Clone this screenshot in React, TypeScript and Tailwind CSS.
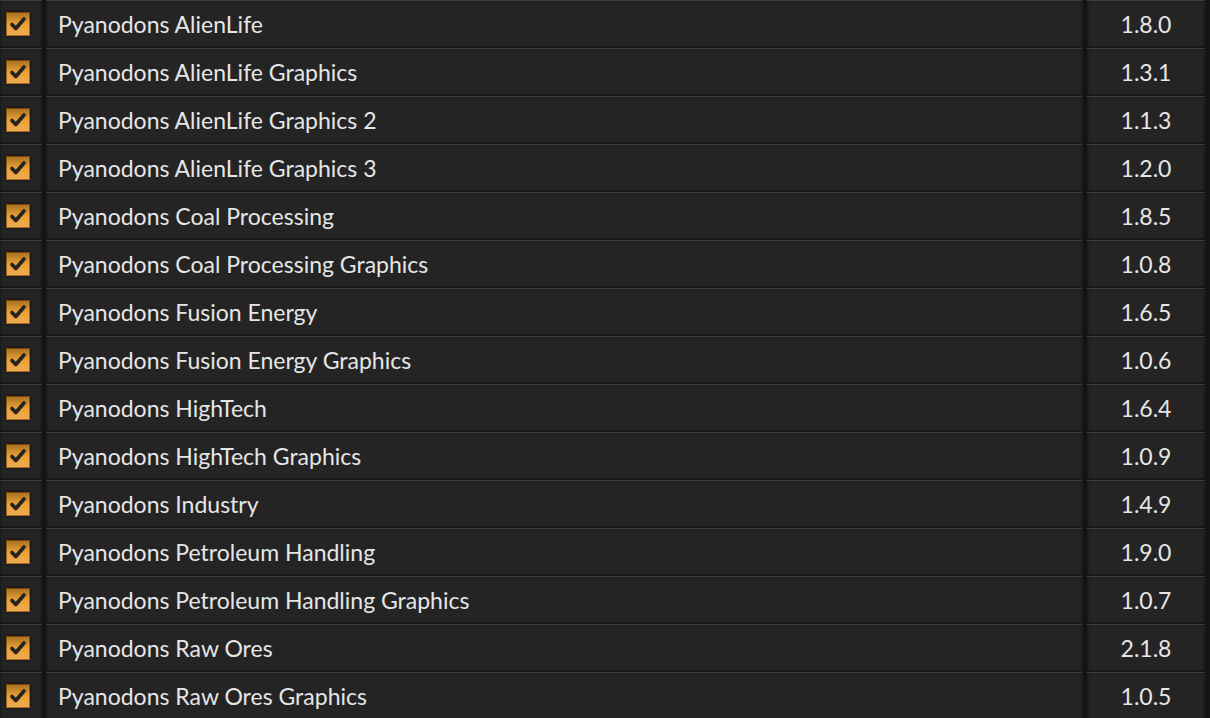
const mods: [string, string][] = [
  ["Pyanodons AlienLife", "1.8.0"],
  ["Pyanodons AlienLife Graphics", "1.3.1"],
  ["Pyanodons AlienLife Graphics 2", "1.1.3"],
  ["Pyanodons AlienLife Graphics 3", "1.2.0"],
  ["Pyanodons Coal Processing", "1.8.5"],
  ["Pyanodons Coal Processing Graphics", "1.0.8"],
  ["Pyanodons Fusion Energy", "1.6.5"],
  ["Pyanodons Fusion Energy Graphics", "1.0.6"],
  ["Pyanodons HighTech", "1.6.4"],
  ["Pyanodons HighTech Graphics", "1.0.9"],
  ["Pyanodons Industry", "1.4.9"],
  ["Pyanodons Petroleum Handling", "1.9.0"],
  ["Pyanodons Petroleum Handling Graphics", "1.0.7"],
  ["Pyanodons Raw Ores", "2.1.8"],
  ["Pyanodons Raw Ores Graphics", "1.0.5"],
]

function Checkbox() {
  return (
    <div className="size-6 bg-gradient-to-b from-[#a86e1c] via-[#eaa03a] to-[#f0ad4c] shadow-[inset_0_0_0_1px_rgba(70,40,5,0.5),0_0_3px_rgba(0,0,0,0.7)]">
      <svg viewBox="0 0 24 24" className="size-6">
        <path
          d="M6 12.5 L9.8 16.5 L18 7"
          fill="none"
          stroke="#26231f"
          strokeWidth="3.6"
          strokeLinecap="round"
          strokeLinejoin="round"
        />
      </svg>
    </div>
  )
}

const cell =
  "h-full bg-[#242424] border-t border-[#3a3a3a] shadow-[inset_2px_0_3px_-1px_rgba(0,0,0,0.35),inset_-2px_0_3px_-1px_rgba(0,0,0,0.35)]"

export default function App() {
  return (
    <div
      className="h-[718px] w-[1210px] overflow-hidden bg-[#141414]"
      style={{ fontFamily: "Lato, 'Noto Sans', sans-serif" }}
    >
      {mods.map(([name, version]) => (
        <div key={name} className="flex h-12 gap-1 border-b border-[#151515]">
          <div className={`${cell} flex w-[42px] items-center pl-[6px]`}>
            <Checkbox />
          </div>
          <div className={`${cell} flex flex-1 items-center pl-3 text-[23px] text-[#e6e6e6]`}>
            {name}
          </div>
          <div className={`${cell} mr-[5px] flex w-[118px] items-center justify-center text-[23px] text-[#e6e6e6]`}>
            {version}
          </div>
        </div>
      ))}
    </div>
  )
}
